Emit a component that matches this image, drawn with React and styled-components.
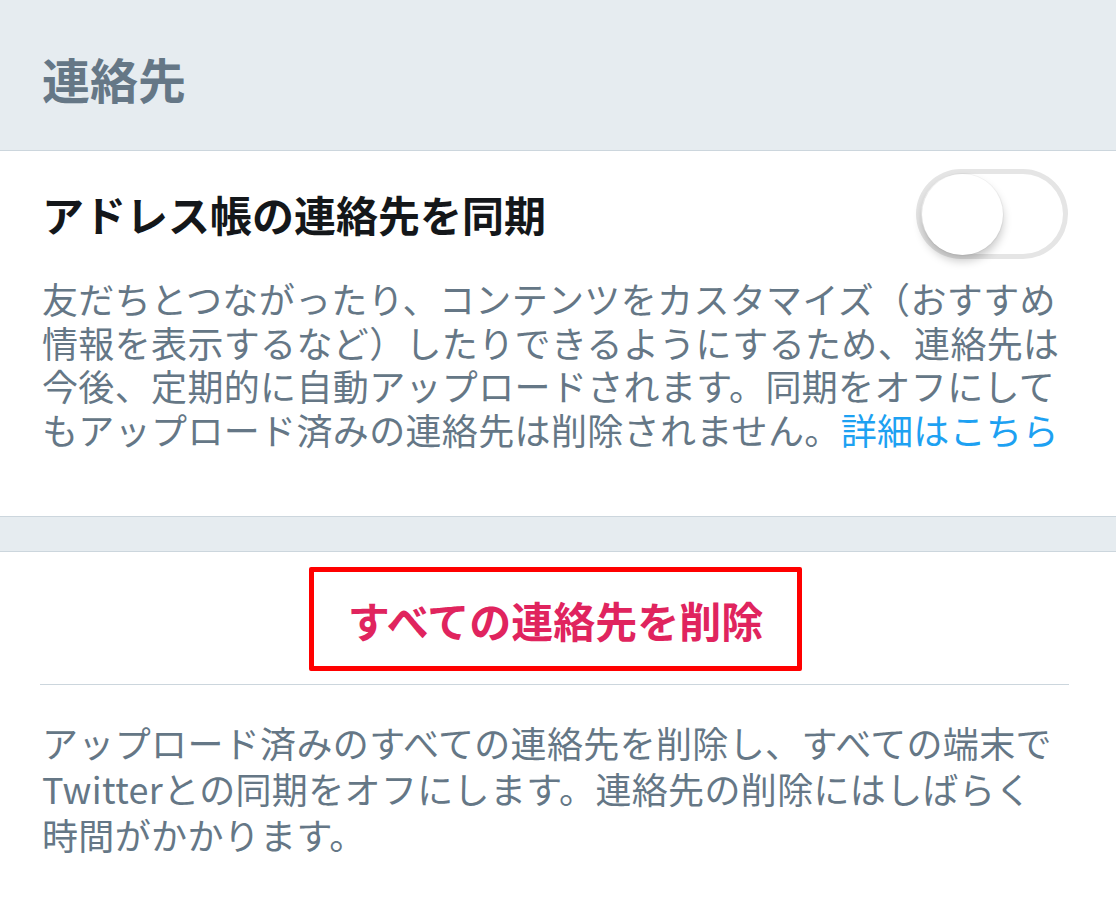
import styled, { createGlobalStyle } from "styled-components"

const GlobalStyle = createGlobalStyle`
  html, body {
    margin: 0;
    padding: 0;
    background: #ffffff;
  }
  body {
    font-family: "Noto Sans CJK JP", "Noto Sans", sans-serif;
  }
  * {
    box-sizing: border-box;
  }
`

const Page = styled.div`
  width: 1116px;
  background: #ffffff;
`

const SectionHeader = styled.div`
  height: 151px;
  display: flex;
  align-items: center;
  padding: 6px 42px 0;
  background: #e6ecf0;
  border-bottom: 1px solid #ccd6dd;
`

const HeaderTitle = styled.h2`
  margin: 0;
  font-size: 48px;
  line-height: 58px;
  font-weight: 700;
  color: #657786;
`

const Section = styled.div`
  padding: 18px 48px 65px 42px;
`

const Row = styled.div`
  display: flex;
  align-items: center;
  justify-content: space-between;
`

const RowTitle = styled.div`
  font-size: 42px;
  line-height: 52px;
  font-weight: 700;
  color: #14171a;
`

const Track = styled.div`
  position: relative;
  width: 152px;
  height: 90px;
  border-radius: 45px;
  background: #ffffff;
  box-shadow: inset 0 0 0 5px #e5e5e5;
`

const Knob = styled.div`
  position: absolute;
  top: 5px;
  left: ${(p) => (p.on ? "67px" : "6px")};
  width: 81px;
  height: 81px;
  border-radius: 50%;
  background: #ffffff;
  box-shadow: 0 6px 10px rgba(0, 0, 0, 0.22), 0 0 0 1px rgba(0, 0, 0, 0.04);
`

const Description = styled.p`
  margin: ${(p) => p.top || "18px"} 0 0;
  font-size: 36px;
  line-height: ${(p) => p.lh || "43.5px"};
  letter-spacing: 0.35px;
  white-space: nowrap;
  color: #657786;
`

const Link = styled.a`
  color: #1da1f2;
  text-decoration: none;
`

const Spacer = styled.div`
  height: 36px;
  background: #e6ecf0;
  border-top: 1px solid #ccd6dd;
  border-bottom: 1px solid #ccd6dd;
`

const ButtonArea = styled.div`
  display: flex;
  justify-content: center;
  padding: 15px 0 13px;
`

const DangerButton = styled.button`
  width: 493px;
  height: 104px;
  margin-right: 5px;
  display: flex;
  align-items: center;
  justify-content: center;
  padding: 0;
  background: #ffffff;
  border: 5px solid #ff0000;
  border-radius: 2px;
  font-family: inherit;
  font-size: 42px;
  font-weight: 700;
  color: #e0245e;
`

const Divider = styled.div`
  height: 1px;
  margin: 0 47px 0 40px;
  background: #ccd6dd;
`

const Footer = styled.div`
  padding: 34px 42px 40px;
`

const Toggle = ({ on }) => (
  <Track>
    <Knob on={on} />
  </Track>
)

const App = () => {
  return (
    <Page>
      <GlobalStyle />
      <SectionHeader>
        <HeaderTitle>連絡先</HeaderTitle>
      </SectionHeader>
      <Section>
        <Row>
          <RowTitle>アドレス帳の連絡先を同期</RowTitle>
          <Toggle on={false} />
        </Row>
        <Description>
          友だちとつながったり、コンテンツをカスタマイズ（おすすめ
          <br />
          情報を表示するなど）したりできるようにするため、連絡先は
          <br />
          今後、定期的に自動アップロードされます。同期をオフにして
          <br />
          もアップロード済みの連絡先は削除されません。
          <Link href="#">詳細はこちら</Link>
        </Description>
      </Section>
      <Spacer />
      <ButtonArea>
        <DangerButton>すべての連絡先を削除</DangerButton>
      </ButtonArea>
      <Divider />
      <Footer>
        <Description top="0" lh="46px">
          アップロード済みのすべての連絡先を削除し、すべての端末で
          <br />
          Twitterとの同期をオフにします。連絡先の削除にはしばらく
          <br />
          時間がかかります。
        </Description>
      </Footer>
    </Page>
  )
}

export default App
